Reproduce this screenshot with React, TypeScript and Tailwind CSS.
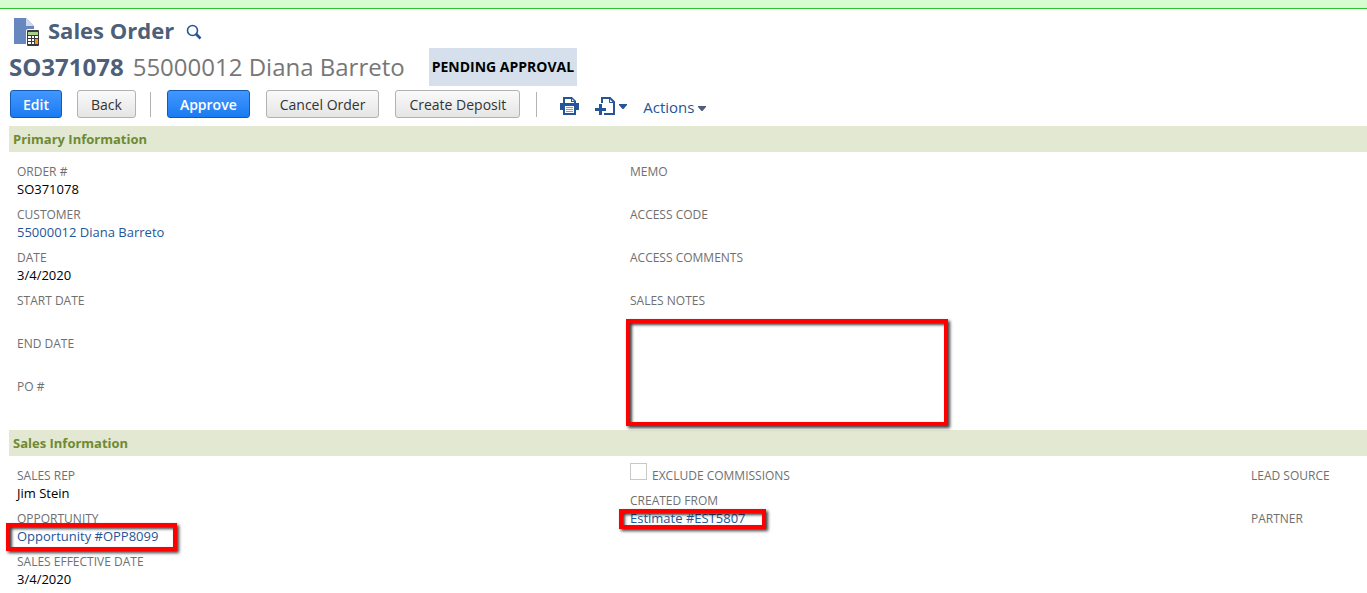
import React from "react";

type FieldProps = {
  label: string;
  value?: string;
  link?: boolean;
  children?: React.ReactNode;
};

const Field = ({ label, value, link, children }: FieldProps) => (
  <div className="relative">
    <dt className="h-[18px] text-[12px] leading-5 text-[#6f6f6f] uppercase whitespace-nowrap">
      {label}
    </dt>
    <dd className="h-[18px] text-[13px] leading-[18px] text-black whitespace-nowrap">
      {link ? (
        <a href="#" className="text-[#255599]">
          {value}
        </a>
      ) : (
        value
      )}
    </dd>
    {children}
  </div>
);

// red callout frame that lies over a field
const Callout = ({ className }: { className: string }) => (
  <div
    className={`absolute pointer-events-none shadow-[2px_2px_3px_rgba(0,0,0,0.75),inset_2px_2px_3px_rgba(0,0,0,0.75)] border-[#ff0000] ${className}`}
  />
);

const Column = ({ children }: { children?: React.ReactNode }) => (
  <dl className="flex flex-col gap-[7px]">{children}</dl>
);

const Section = ({
  title,
  children,
}: {
  title: string;
  children: React.ReactNode;
}) => (
  <section>
    <h2 className="ml-[9px] h-[26px] pl-1 bg-[#e2e8d2] text-[13px] leading-[26px] font-bold text-[#6f8a32]">
      {title}
    </h2>
    <div className="grid grid-cols-[613fr_621fr_116fr] pl-[17px] pt-[10px] pb-[17px]">
      {children}
    </div>
  </section>
);

const Button = ({
  primary,
  children,
}: {
  primary?: boolean;
  children: React.ReactNode;
}) => (
  <button
    type="button"
    className={
      primary
        ? "h-7 px-3 rounded-[3px] border border-[#125ab2] bg-linear-to-b from-[#4297ff] to-[#187bf2] text-[14px] font-semibold text-white"
        : "h-7 px-[13px] rounded-[3px] border border-[#b2b2b2] bg-linear-to-b from-[#fafafa] to-[#e5e5e5] text-[14px] font-medium text-[#333333]"
    }
  >
    {children}
  </button>
);

const Divider = () => <span className="w-px h-[25px] bg-[#b3b3b3]" />;

const Caret = ({ className }: { className: string }) => (
  <svg width="8" height="5" viewBox="0 0 8 5" className={className}>
    <path d="M0 0H8V1L4.5 5H3.5L0 1Z" fill="currentColor" />
  </svg>
);

const OrderIcon = () => (
  <svg width="26" height="28" viewBox="0 0 26 28">
    <path d="M0 0H12L20 8V26H0Z" fill="#6787c1" />
    <path d="M12 0L20 8H12Z" fill="#cfd9eb" />
    <rect x="12" y="11" width="14" height="17" rx="2" fill="#ffffff" />
    <rect x="13" y="12" width="12" height="16" rx="1" fill="#3a3a3a" />
    <rect x="14" y="14" width="10" height="3" fill="#a9d18b" />
    <path
      d="M14 18h3v2h-3zM18 18h2v2h-2zM21 18h3v2h-3zM14 21h3v2h-3zM18 21h2v2h-2zM14 24h3v2h-3zM18 24h2v2h-2z"
      fill="#ffffff"
    />
    <path d="M21 21h3v5h-3z" fill="#f7941d" />
  </svg>
);

const SearchIcon = () => (
  <svg width="16" height="16" viewBox="0 0 16 16" fill="none" stroke="#255599">
    <circle cx="6.5" cy="6.5" r="5" strokeWidth="1.6" />
    <path d="M10 10L14.5 14.5" strokeWidth="2.6" />
  </svg>
);

const PrintIcon = () => (
  <svg width="19" height="18" viewBox="0 0 19 18">
    <path d="M3 0H12L16 4V6H19V13H16V18H3V13H0V6H3Z" fill="#255599" />
    <path d="M5 2H11V5H14V6H5Z" fill="#ffffff" />
    <path d="M12 2L14 4H12Z" fill="#ffffff" />
    <path d="M5 9H14V16H5Z" fill="#ffffff" />
    <path d="M6 10h7v1H6zM6 12h7v1H6zM6 14h7v1H6z" fill="#7f9cc6" />
  </svg>
);

const NewDocIcon = () => (
  <svg width="20" height="18" viewBox="0 0 20 18">
    <path
      d="M7 6V1H15L19 5V17H9"
      fill="none"
      stroke="#255599"
      strokeWidth="2"
    />
    <path d="M14.5 1V5.5H19" fill="none" stroke="#255599" />
    <path d="M4 7h3v4h4v3H7v4H4v-4H0v-3h4z" fill="#255599" />
  </svg>
);

const App = () => {
  return (
    <div className="w-full overflow-x-hidden bg-white font-['Open_Sans',sans-serif]">
      <div className="h-[9px] bg-[#d7fcd1] border-b border-[#2cc52c]" />

      <header className="pl-[9px]">
        <div className="flex items-center h-[39px] pt-[6px] pl-[5px]">
          <OrderIcon />
          <h1 className="ml-2 pb-1 text-[22px] leading-[30px] font-bold text-[#4d5f79]">
            Sales Order
          </h1>
          <button type="button" aria-label="Search" className="ml-3">
            <SearchIcon />
          </button>
        </div>

        <div className="flex items-center h-[38px] text-[24px] whitespace-nowrap">
          <span className="font-bold text-[#4d5f79]">SO371078</span>
          <span className="ml-[9px] text-[#777777]">55000012 Diana Barreto</span>
          <span className="ml-6 h-[38px] px-[3px] bg-[#d5e0ec] text-[14px] leading-[38px] font-bold text-black">
            PENDING APPROVAL
          </span>
        </div>

        <div className="flex items-center h-7 mt-1 mb-2 pl-px whitespace-nowrap">
          <div className="flex items-center gap-[15px]">
            <Button primary>Edit</Button>
            <Button>Back</Button>
          </div>
          <div className="flex items-center gap-4 ml-[14px]">
            <Divider />
            <Button primary>Approve</Button>
            <Button>Cancel Order</Button>
            <Button>Create Deposit</Button>
            <Divider />
          </div>
          <button type="button" aria-label="Print" className="ml-[23px] pt-1">
            <PrintIcon />
          </button>
          <button
            type="button"
            aria-label="New"
            className="flex items-center gap-1 ml-4 pt-1 text-[#255599]"
          >
            <NewDocIcon />
            <Caret className="text-[#255599]" />
          </button>
          <button
            type="button"
            className="flex items-center gap-1 ml-4 pt-[6px] text-[15px] font-medium text-[#255599]"
          >
            Actions
            <Caret className="mt-[2px] text-[#4d5f79]" />
          </button>
        </div>
      </header>

      <main>
        <Section title="Primary Information">
          <Column>
            <Field label="Order #" value="SO371078" />
            <Field label="Customer" value="55000012 Diana Barreto" link />
            <Field label="Date" value="3/4/2020" />
            <Field label="Start Date" />
            <Field label="End Date" />
            <Field label="PO #" />
          </Column>
          <Column>
            <Field label="Memo" />
            <Field label="Access Code" />
            <Field label="Access Comments" />
            <Field label="Sales Notes">
              <Callout className="-left-1 top-7 w-[322px] h-[107px] border-4" />
            </Field>
          </Column>
        </Section>

        <Section title="Sales Information">
          <Column>
            <Field label="Sales Rep" value="Jim Stein" />
            <Field label="Opportunity" value="Opportunity #OPP8099" link>
              <Callout className="-left-[11px] top-[14px] w-[171px] h-7 border-4" />
            </Field>
            <Field label="Sales Effective Date" value="3/4/2020" />
          </Column>
          <div className="flex flex-col gap-[7px]">
            <div className="flex items-center gap-[5px] h-[18px]">
              <input
                id="exclude-commissions"
                type="checkbox"
                className="appearance-none w-[17px] h-[17px] mb-2 border border-[#c8c8c8] bg-white"
              />
              <label
                htmlFor="exclude-commissions"
                className="h-[18px] text-[12px] leading-5 text-[#6f6f6f] uppercase"
              >
                Exclude Commissions
              </label>
            </div>
            <Column>
              <Field label="Created From" value="Estimate #EST5807" link>
                <Callout className="-left-[11px] top-[18px] w-[147px] h-5 border-4" />
              </Field>
            </Column>
          </div>
          <Column>
            <Field label="Lead Source" />
            <Field label="Partner" />
          </Column>
        </Section>
      </main>
    </div>
  );
};

export default App;
